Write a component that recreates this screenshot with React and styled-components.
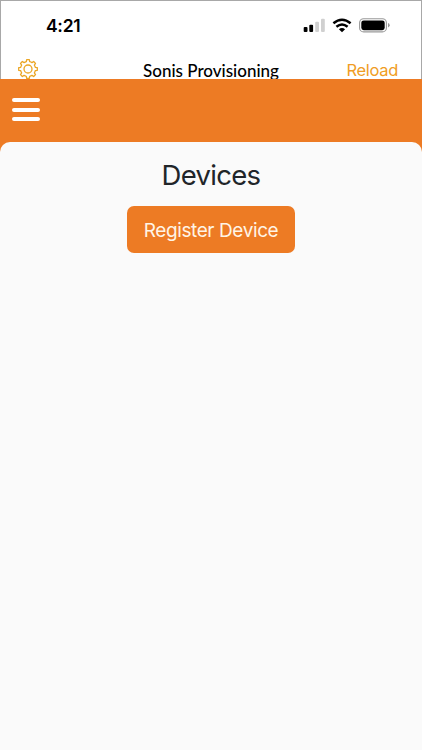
import styled, { createGlobalStyle } from 'styled-components';

const GlobalStyle = createGlobalStyle`
  * {
    box-sizing: border-box;
  }

  body {
    margin: 0;
    font-family: 'Inter', 'Liberation Sans', sans-serif;
    background-color: #fafafa;
  }
`;

// ========== STYLED COMPONENTS ==========

const Screen = styled.div`
  display: flex;
  flex-direction: column;
  width: 100%;
  height: 100vh;
  overflow: hidden;
  background-color: #ed7b24;
`;

const TopArea = styled.div`
  flex: none;
  height: 79px;
  overflow: hidden;
  background-color: #fff;
  border: 1px solid #a8a8a8;
  border-bottom: none;
`;

const StatusBar = styled.div`
  display: flex;
  align-items: center;
  justify-content: space-between;
  height: 49px;
  padding: 0 31px 0 45px;
`;

const Clock = styled.span`
  font-size: 17.5px;
  font-weight: 600;
  letter-spacing: -0.3px;
  color: #000;
`;

const StatusIcons = styled.div`
  display: flex;
  align-items: center;
  gap: 7px;

  svg {
    display: block;
  }
`;

const NavBar = styled.div`
  display: grid;
  grid-template-columns: 1fr auto 1fr;
  align-items: center;
  height: 40px;
  padding: 0 23px 0 16px;
`;

const IconButton = styled.button`
  display: flex;
  padding: 0 0 2px;
  border: none;
  background: none;
  color: #eba625;
`;

const NavTitle = styled.span`
  padding-left: 7px;
  font-family: 'Lato', sans-serif;
  font-size: 17px;
  font-weight: 500;
  color: #000;
  white-space: nowrap;
`;

const ReloadButton = styled.button`
  justify-self: end;
  padding: 0;
  border: none;
  background: none;
  font-family: inherit;
  font-size: 16.5px;
  letter-spacing: -0.3px;
  color: #f09d24;
`;

const Header = styled.header`
  flex: none;
  display: flex;
  align-items: center;
  height: 63px;
  padding: 0 12px 2px;
`;

const MenuButton = styled.button`
  display: flex;
  flex-direction: column;
  gap: 5.7px;
  width: 28px;
  padding: 0;
  border: none;
  background: none;
`;

const MenuLine = styled.span`
  height: 4px;
  border-radius: 2px;
  background-color: #fff;
`;

const Content = styled.main`
  flex: 1;
  display: flex;
  flex-direction: column;
  align-items: center;
  padding-top: 16px;
  border-radius: 10px 10px 0 0;
  background-color: #fafafa;
`;

const Heading = styled.h1`
  margin: 0 0 14px;
  font-size: 27.5px;
  line-height: 34px;
  font-weight: 400;
  letter-spacing: -0.7px;
  color: #212529;
`;

const RegisterButton = styled.button`
  width: 168px;
  height: 47px;
  padding: 2px 0 0;
  border: none;
  border-radius: 7px;
  background-color: #ed7b24;
  font-family: inherit;
  font-size: 19px;
  letter-spacing: -0.4px;
  color: #fff4e6;
  white-space: nowrap;
`;

// ========== ICONS ==========

// Eight teeth around the hub: each one is rim, tip, tip, rim
const gearPoint = (radius, degrees) => {
  const angle = ((degrees - 90) * Math.PI) / 180;
  return `${(11 + radius * Math.cos(angle)).toFixed(2)} ${(11 + radius * Math.sin(angle)).toFixed(2)}`;
};

const gearPath =
  [0, 45, 90, 135, 180, 225, 270, 315]
    .map((center, i) => {
      const start = `${i === 0 ? 'M' : 'A7.5 7.5 0 0 1 '}${gearPoint(7.5, center - 13)}`;
      return `${start} L${gearPoint(9.4, center - 8)} L${gearPoint(9.4, center + 8)} L${gearPoint(7.5, center + 13)}`;
    })
    .join(' ') + ' Z';

const GearIcon = () => (
  <svg width="22" height="22" viewBox="0 0 22 22" fill="none" stroke="currentColor" strokeWidth="1.3" strokeLinejoin="round">
    <path d={gearPath} />
    <circle cx="11" cy="11" r="4" />
  </svg>
);

const SignalIcon = () => (
  <svg width="22" height="15" viewBox="0 0 22 15">
    <rect x="0.7" y="9" width="3.8" height="5" rx="1" fill="#000" />
    <rect x="6.3" y="6.8" width="3.8" height="7.2" rx="1" fill="#000" />
    <rect x="12.2" y="3.8" width="3.8" height="10.2" rx="1" fill="#d0d0d0" />
    <rect x="18" y="0.8" width="3.8" height="13.2" rx="1" fill="#d0d0d0" />
  </svg>
);

const WifiIcon = () => (
  <svg width="20" height="15" viewBox="0 0 20 15">
    <g fill="none" stroke="#000" strokeWidth="2.5">
      <path d="M1.4 5.3 Q10 -1.7 18.6 5.3" />
      <path d="M4.4 8.8 Q10 4.2 15.6 8.8" />
    </g>
    <path d="M6.9 11.2 Q10 8.7 13.1 11.2 L10 14.3 Z" fill="#000" />
  </svg>
);

const BatteryIcon = () => (
  <svg width="31" height="15" viewBox="0 0 31 15">
    <rect x="0.6" y="0.7" width="26.8" height="13.2" rx="4" fill="none" stroke="#999" strokeWidth="1.1" />
    <rect x="2.3" y="2.4" width="23.4" height="9.8" rx="2.4" fill="#000" />
    <path d="M29 5.1 Q30.7 5.7 30.7 7.3 Q30.7 8.9 29 9.5 Z" fill="#999" />
  </svg>
);

// ========== PAGE ==========

export default function App() {
  return (
    <Screen>
      <GlobalStyle />
      <TopArea>
        <StatusBar>
          <Clock>4:21</Clock>
          <StatusIcons>
            <SignalIcon />
            <WifiIcon />
            <BatteryIcon />
          </StatusIcons>
        </StatusBar>
        <NavBar>
          <IconButton aria-label="Settings">
            <GearIcon />
          </IconButton>
          <NavTitle>Sonis Provisioning</NavTitle>
          <ReloadButton>Reload</ReloadButton>
        </NavBar>
      </TopArea>

      <Header>
        <MenuButton aria-label="Menu">
          <MenuLine />
          <MenuLine />
          <MenuLine />
        </MenuButton>
      </Header>

      <Content>
        <Heading>Devices</Heading>
        <RegisterButton>Register Device</RegisterButton>
      </Content>
    </Screen>
  );
}
